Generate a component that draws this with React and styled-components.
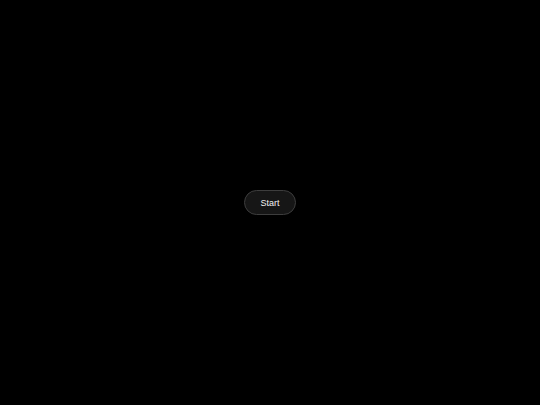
import React from "react";
import styled, { createGlobalStyle } from "styled-components";

const Global = createGlobalStyle`
  html, body, #root { margin: 0; padding: 0; height: 100%; }
  body { background: #000; font-family: "Liberation Sans", Arial, sans-serif; }
`;

const Stage = styled.main`
  height: 100vh;
  display: flex;
  align-items: center;
  justify-content: center;
  background: #000;
`;

const StartButton = styled.button`
  box-sizing: border-box;
  width: 52px;
  height: 25px;
  padding: 0;
  border-radius: 999px;
  border: 1px solid #3d3d3d;
  background: #161616;
  color: #f2f2f2;
  font-family: "Liberation Sans", Arial, sans-serif;
  font-size: 9px;
  cursor: pointer;
`;

export default function App() {
  return (
    <>
      <Global />
      <Stage>
        <StartButton>Start</StartButton>
      </Stage>
    </>
  );
}
